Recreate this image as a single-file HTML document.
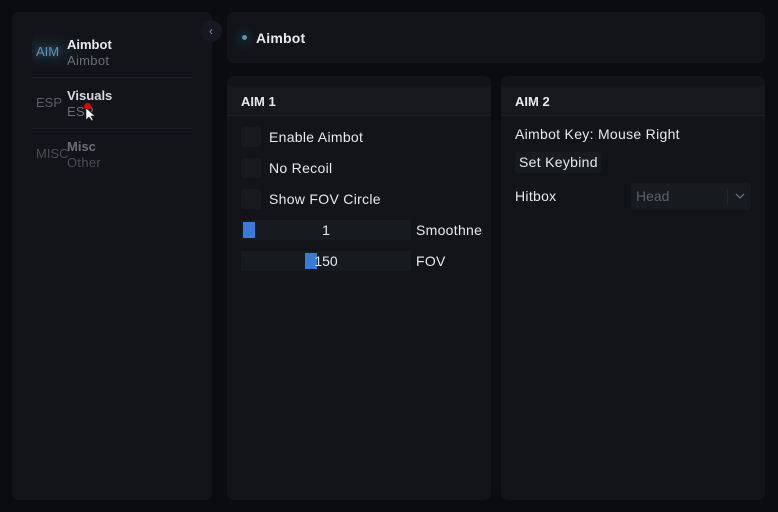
<!DOCTYPE html>
<html><head><meta charset="utf-8"><style>
*{margin:0;padding:0;box-sizing:border-box}
body{width:778px;height:512px;background:#0b0c0f;font-family:"Liberation Sans",sans-serif;color:#e8e9ec;position:relative;overflow:hidden;font-size:13px}
.p{position:absolute;background:#121419;border-radius:7px}
.side{left:12px;top:12px;width:200px;height:488px}
.item{position:absolute;left:24px;width:156px}
.tag{position:absolute;left:0;font-size:13px;color:#5a5d64}
.t{position:absolute;left:31px;font-weight:bold;font-size:13px}
.s{position:absolute;left:31px;font-size:13px;letter-spacing:.3px;color:#6a6d74}
.sep{position:absolute;left:20px;width:160px;height:1px;background:#1d2026}
.cb{position:absolute;width:20px;height:20px;background:#181a1f;border-radius:3px}
.lbl{position:absolute;font-size:14px;letter-spacing:.3px;white-space:nowrap}
.sl{position:absolute;height:20px;width:170px;background:#171a1f;font-size:14px}
.fill{position:absolute;top:2px;width:12px;height:16px;background:#3c7ad8}
</style></head><body>
<div class="p side">
  <div style="position:absolute;left:20px;top:20px;width:60px;height:36px;border-radius:10px;background:radial-gradient(ellipse at 15px 18px,rgba(60,110,150,.18),transparent 70%)"></div>
  <div class="item" style="top:25px">
    <div class="tag" style="top:7px;color:#5d93ad;text-shadow:0 0 6px rgba(80,150,190,.6)">AIM</div>
    <div class="t" style="top:0">Aimbot</div>
    <div class="s" style="top:16px">Aimbot</div>
  </div>
  <div class="sep" style="top:65px"></div>
  <div class="item" style="top:76px">
    <div class="tag" style="top:7px">ESP</div>
    <div class="t" style="top:0;color:#d8d9dc">Visuals</div>
    <div class="s" style="top:16px">ESP</div>
  </div>
  <div style="position:absolute;left:72px;top:91px;width:7px;height:7px;border-radius:50%;background:#e10000"></div>
  <svg style="position:absolute;left:73px;top:95px" width="12" height="16"><path d="M1 1 L1 13 L4 10 L7 14 L8 13 L6 9 L10 9 Z" fill="#fff" stroke="#222" stroke-width=".6"/></svg>
  <div class="sep" style="top:116px"></div>
  <div class="item" style="top:127px">
    <div class="tag" style="top:7px;color:#4a4d53">MISC</div>
    <div class="t" style="top:0;color:#6b6e74">Misc</div>
    <div class="s" style="top:16px;color:#4a4d53">Other</div>
  </div>
</div>
<div style="position:absolute;left:200px;top:20px;width:22px;height:22px;border-radius:50%;background:#151820;color:#8a8e96;font-size:12px;text-align:center;line-height:22px">&lsaquo;</div>
<div class="p" style="left:227px;top:12px;width:538px;height:51px">
  <div style="position:absolute;left:15px;top:23px;width:5px;height:5px;border-radius:50%;background:#5d93ad;box-shadow:0 0 10px 5px rgba(60,110,150,.2)"></div>
  <div style="position:absolute;left:29px;top:18px;font-weight:bold;font-size:14px;letter-spacing:.2px">Aimbot</div>
</div>
<div class="p" style="left:227px;top:76px;width:264px;height:424px;overflow:hidden">
  <div style="position:absolute;left:0;top:10px;width:264px;height:30px;background:#16181d;border-bottom:1px solid #1c1f24"></div>
  <div style="position:absolute;left:14px;top:18px;font-weight:bold">AIM 1</div>
  <div class="cb" style="left:14px;top:51px"></div><div class="lbl" style="left:42px;top:53px">Enable Aimbot</div>
  <div class="cb" style="left:14px;top:82px"></div><div class="lbl" style="left:42px;top:84px">No Recoil</div>
  <div class="cb" style="left:14px;top:113px"></div><div class="lbl" style="left:42px;top:115px">Show FOV Circle</div>
  <div class="sl" style="left:14px;top:144px"><div class="fill" style="left:2px"></div><div style="position:absolute;width:170px;text-align:center;top:2px">1</div></div>
  <div style="position:absolute;left:189px;top:146px;width:67px;height:20px;overflow:hidden"><div class="lbl" style="left:0;top:0">Smoothness</div></div>
  <div class="sl" style="left:14px;top:175px"><div class="fill" style="left:64px"></div><div style="position:absolute;width:170px;text-align:center;top:2px">150</div></div>
  <div class="lbl" style="left:189px;top:177px">FOV</div>
</div>
<div class="p" style="left:501px;top:76px;width:264px;height:424px">
  <div style="position:absolute;left:0;top:10px;width:264px;height:30px;background:#16181d;border-bottom:1px solid #1c1f24"></div>
  <div style="position:absolute;left:14px;top:18px;font-weight:bold">AIM 2</div>
  <div class="lbl" style="left:14px;top:50px">Aimbot Key: Mouse Right</div>
  <div style="position:absolute;left:14px;top:76px;width:86px;height:21px;background:#171a1f;border-radius:3px;padding:2px 0 0 4px;font-size:14px;letter-spacing:.3px;white-space:nowrap">Set Keybind</div>
  <div class="lbl" style="left:14px;top:112px">Hitbox</div>
  <div style="position:absolute;left:130px;top:107px;width:120px;height:27px;background:#171a1f;border-radius:3px">
    <div style="position:absolute;left:5px;top:5px;color:#5d6067;font-size:14px">Head</div>
    <div style="position:absolute;left:96px;top:6px;width:1px;height:15px;background:#22252b"></div>
    <svg style="position:absolute;left:104px;top:10px" width="10" height="7"><path d="M1 1 L5 5 L9 1" stroke="#6a6d74" fill="none" stroke-width="1.3"/></svg>
  </div>
</div>
</body></html>
